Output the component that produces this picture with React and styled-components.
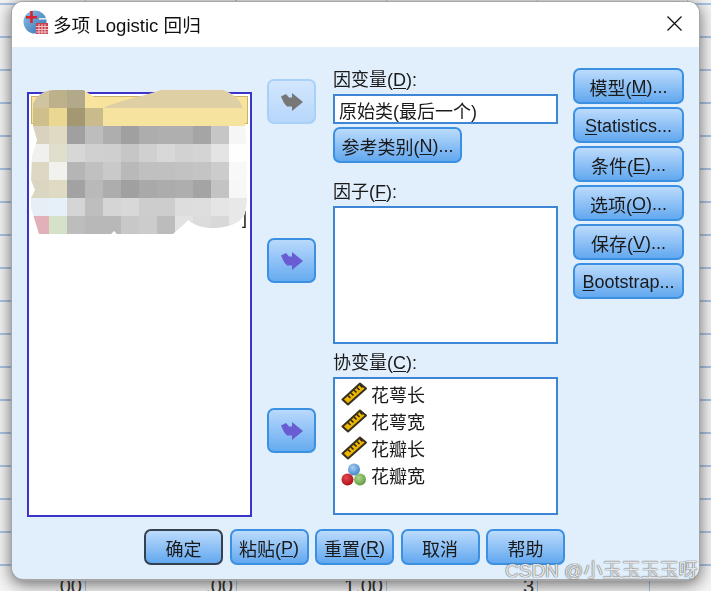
import React from 'react'
import styled, { createGlobalStyle, css } from 'styled-components'

const GlobalStyle = createGlobalStyle`
  html, body {
    margin: 0;
    padding: 0;
    overflow: hidden;
  }
  body {
    font-family: "Liberation Sans", "Noto Sans CJK SC", sans-serif;
    color: #1a1a1a;
  }
`

const Backdrop = styled.div`
  position: relative;
  width: 711px;
  height: 591px;
  overflow: hidden;
  display: flex;
  flex-direction: column;
  justify-content: flex-end;
  background-color: #f4f4f4;
  background-image:
    repeating-linear-gradient(to bottom, transparent 0 3px, #a9c5e2 3px 5px, transparent 5px 33px),
    repeating-linear-gradient(to right, transparent 0 85px, #b4cbe2 85px 86px, transparent 86px 150.5px);
`

const SheetRow = styled.div`
  display: flex;
  height: 26px;
  background: #f4f4f4;
  border-top: 1px solid #a9c5e2;
  box-sizing: border-box;
`

const SheetCell = styled.div`
  width: ${props => props.$width}px;
  box-sizing: border-box;
  padding: 9px 3px 0 0;
  text-align: right;
  font-size: 20px;
  line-height: 22px;
  color: #333;
  border-right: 1px solid #a9c5e2;
`

const Dialog = styled.div`
  position: absolute;
  left: 12px;
  top: 2px;
  width: 687px;
  height: 577px;
  box-sizing: border-box;
  border-radius: 11px;
  overflow: hidden;
  background: #e1eefb;
  display: flex;
  flex-direction: column;
  filter: blur(0.4px);
`

const DialogShadow = styled.div`
  position: absolute;
  left: 11px;
  top: 1px;
  width: 689px;
  height: 580px;
  border-radius: 12px;
  background: #a6a6a6;
  box-shadow: 0 3px 16px rgba(0, 0, 0, 0.58);
`

const TitleBar = styled.div`
  height: 45px;
  flex: none;
  box-sizing: border-box;
  background: #fff;
  display: flex;
  align-items: center;
  gap: 4px;
  padding: 0 17px 3px 11px;
  font-size: 18.6px;
  color: #111;
`

const TitleText = styled.span`
  flex: 1;
`

const Content = styled.div`
  flex: 1;
  padding: 21px 15px 0;
  display: flex;
  flex-direction: column;
`

const TopRow = styled.div`
  display: flex;
`

const SourceList = styled.div`
  position: relative;
  width: 225px;
  height: 425px;
  margin-top: 24px;
  box-sizing: border-box;
  background: #fff;
  border: 2px solid #3a35c8;
  padding: 2px;
`

const SelectedRow = styled.div`
  height: 28px;
  box-sizing: border-box;
  background: #f8e39d;
  border: 1px solid #c9b26a;
`

const HiddenTail = styled.span`
  position: absolute;
  right: 3px;
  top: 114px;
  font-size: 18px;
  line-height: 20px;
`

const Mosaic = styled.div`
  position: absolute;
  left: 2px;
  top: -4px;
  width: 216px;
  height: 144px;
  display: grid;
  grid-template-columns: repeat(12, 18px);
  grid-auto-rows: 18px;
  clip-path: path('M2 14 C6 4 14 0 24 0 L52 0 C60 4 68 10 72 18 C84 12 104 8 124 2 L130 0 L192 0 C204 4 212 12 213 24 L214 36 L216 60 L215 100 L216 110 L214 124 C210 132 200 138 180 138 C170 138 162 134 157 130 C152 136 146 140 142 144 L86 144 L83 141 L80 144 L8 144 L0 118 L0 108 L4 100 L0 90 L1 66 L6 50 L2 36 Z');
`

const MosaicCell = styled.div`
  background: ${props => props.$color};
`

const ArrowColumn = styled.div`
  width: 49px;
  margin: 0 17px 0 15px;
  display: flex;
  flex-direction: column;
`

const ArrowButton = styled.div`
  width: 49px;
  height: 45px;
  margin-top: ${props => props.$top}px;
  box-sizing: border-box;
  border-radius: 7px;
  display: flex;
  align-items: center;
  justify-content: center;
  ${props => props.$disabled
    ? css`
      border: 2px solid #a9d0f8;
      background: linear-gradient(#d3e6fd, #b6d7fb);
    `
    : css`
      border: 2px solid #3c90e2;
      background: linear-gradient(#b9d9fc, #66abf0);
    `}
`

const FieldColumn = styled.div`
  width: 225px;
  margin-right: 15px;
  display: flex;
  flex-direction: column;
  padding-top: 1px;
`

const FieldLabel = styled.div`
  font-size: 18px;
  line-height: 22px;
  margin: ${props => props.$top}px 0 3px;
`

const TextField = styled.div`
  height: 30px;
  box-sizing: border-box;
  background: #fff;
  border: 2px solid #3d86d6;
  padding-left: 4px;
  font-size: 18px;
  line-height: 32px;
  overflow: hidden;
  margin-bottom: 3px;
`

const ListBox = styled.div`
  height: 138px;
  box-sizing: border-box;
  background: #fff;
  border: 2px solid #3d86d6;
  padding: 1px 0 0 6px;
`

const VariableRow = styled.div`
  display: flex;
  align-items: center;
  height: 27px;
  gap: 4px;
  font-size: 18px;
`

const PushButton = styled.div`
  height: 36px;
  box-sizing: border-box;
  width: ${props => (props.$width ? `${props.$width}px` : 'auto')};
  border-radius: 7px;
  border: 2px solid ${props => (props.$default ? '#34424f' : '#3c90e2')};
  background: linear-gradient(#bcdbfc, #62a8ef);
  display: flex;
  align-items: center;
  justify-content: center;
  padding-top: 2px;
  font-size: 18px;
  white-space: nowrap;
`

const SideColumn = styled.div`
  width: 111px;
  display: flex;
  flex-direction: column;
  gap: 3px;
`

const BottomRow = styled.div`
  display: flex;
  justify-content: flex-end;
  gap: 6.5px;
  margin-top: 12px;
  padding-right: 119px;
`

const Key = styled.span`
  text-decoration: underline;
  text-underline-offset: 2px;
`

const Watermark = styled.div`
  position: absolute;
  left: 505px;
  top: 560px;
  font-size: 19px;
  line-height: 22px;
  color: rgba(255, 255, 255, 0.85);
  text-shadow: 0 0 1px #555, 0 0 1px #555;
  white-space: nowrap;
`

const mosaicRows = [
  ['#d0c4a0', '#bdb18b', '#b2a88a', '#f8e49f', '#dfcfa4', '#dfcfa4', '#dfcfa4', '#dfcfa4', '#dfcfa4', '#dfcfa4', '#dfcfa4', '#dfcfa4'],
  ['#cfbf8a', '#ead792', '#a49873', '#c9bb8b', '#f7e3a0', '#f7e3a0', '#f7e3a0', '#f7e3a0', '#f7e3a0', '#f7e3a0', '#f7e3a0', '#f7e3a0'],
  ['#d8d2bf', '#dedac4', '#a0a0a0', '#bdbdbd', '#aeaeae', '#a0a0a0', '#adadad', '#afafaf', '#afafaf', '#a5a5a5', '#c6c6c6', '#f6f6f6'],
  ['#f0f0ee', '#e0dfcb', '#d7d7d7', '#d0d0d0', '#cfcfcf', '#c6c6c6', '#d0d0d0', '#d8d8d8', '#d2d2d2', '#d4d4d4', '#e4e4e4', '#fefefe'],
  ['#dcd8c4', '#f1f1ee', '#b5b5b5', '#c0c0c0', '#c9c9c9', '#b9b9b9', '#c0c0c0', '#c0c0c0', '#c2c2c2', '#c4c4c4', '#cccccc', '#f8f8f8'],
  ['#dad6c2', '#dedac4', '#a2a2a2', '#b9b9b9', '#adadad', '#a0a0a0', '#a9a9a9', '#acacac', '#aeaeae', '#a4a4a4', '#c3c3c3', '#f7f7f7'],
  ['#e6eef6', '#e6f0f8', '#d5d5d5', '#bebebe', '#d5d5d5', '#d8d8d8', '#cdcdcd', '#cdcdcd', '#dddddd', '#dedede', '#e5e5e5', '#e8e8e8'],
  ['#e2b0b8', '#d5e2c8', '#bdbdbd', '#b8b8b8', '#b8b8b8', '#c8c8c8', '#cccccc', '#bcbcbc', '#e2e2e2', '#dcdcdc', '#d8d8d8', '#e8e8e8']
]

const AppIcon = () => (
  <svg width="26" height="26" viewBox="0 0 26 26">
    <defs>
      <linearGradient id="globe" x1="0" y1="0" x2="1" y2="1">
        <stop offset="0" stopColor="#8fc0e6" />
        <stop offset="1" stopColor="#2f6fb0" />
      </linearGradient>
    </defs>
    <circle cx="12" cy="12" r="11.5" fill="url(#globe)" />
    <rect x="16" y="8" width="7" height="1.6" fill="#dfeaf4" />
    <rect x="3" y="6" width="11" height="2.6" fill="#d8232f" />
    <rect x="7.2" y="1" width="2.6" height="12" fill="#d8232f" />
    <rect x="13" y="13" width="12" height="11" fill="#c8404e" />
    <path d="M13 16.5h12M13 19.5h12M13 22h12M16 14v10M19 14v10M22 14v10" stroke="#f2c4c8" strokeWidth="1" />
  </svg>
)

const CloseIcon = () => (
  <svg width="15" height="15" viewBox="0 0 15 15">
    <path d="M0.5 0.5L14.5 14.5M14.5 0.5L0.5 14.5" stroke="#111" strokeWidth="1.3" />
  </svg>
)

const MoveArrow = ({ color }) => (
  <svg width="22" height="18" viewBox="0 0 22 18">
    <path d="M0 3.5L5 1L8 4.5H11V0L22 9L11 18V13.5H6L3 10Z" fill={color} />
  </svg>
)

const RulerIcon = () => (
  <svg width="26" height="24" viewBox="0 0 26 24">
    <path d="M1.5 17.5L19 1.5L25 6.5L7 22.5Z" fill="#efb600" stroke="#37311f" strokeWidth="2" strokeLinejoin="round" />
    <path d="M7 13.5L9.5 16M10 11L12.5 13.5M13 8L15.5 10.5M16 5.5L18.5 8M19 3L21.5 5.5" stroke="#2c2616" strokeWidth="1.6" />
  </svg>
)

const NominalIcon = () => (
  <svg width="26" height="24" viewBox="0 0 26 24">
    <defs>
      <radialGradient id="ballBlue" cx="0.4" cy="0.35" r="0.7">
        <stop offset="0" stopColor="#a8cff4" />
        <stop offset="1" stopColor="#3f82c8" />
      </radialGradient>
      <radialGradient id="ballRed" cx="0.4" cy="0.35" r="0.7">
        <stop offset="0" stopColor="#e8474f" />
        <stop offset="1" stopColor="#a50c18" />
      </radialGradient>
      <radialGradient id="ballGreen" cx="0.4" cy="0.35" r="0.7">
        <stop offset="0" stopColor="#add68a" />
        <stop offset="1" stopColor="#5f9a3e" />
      </radialGradient>
    </defs>
    <circle cx="13" cy="6.5" r="6" fill="url(#ballBlue)" />
    <circle cx="6.5" cy="16.5" r="6" fill="url(#ballRed)" />
    <circle cx="19" cy="16.5" r="6" fill="url(#ballGreen)" />
  </svg>
)

const sideButtons = [
  ['模型(', 'M', ')...'],
  ['', 'S', 'tatistics...'],
  ['条件(', 'E', ')...'],
  ['选项(', 'O', ')...'],
  ['保存(', 'V', ')...'],
  ['', 'B', 'ootstrap...']
]

const covariates = [
  { name: '花萼长', Icon: RulerIcon },
  { name: '花萼宽', Icon: RulerIcon },
  { name: '花瓣长', Icon: RulerIcon },
  { name: '花瓣宽', Icon: NominalIcon }
]

const App = () => (
  <Backdrop>
    <GlobalStyle />
    <SheetRow>
      <SheetCell $width={86}>.00</SheetCell>
      <SheetCell $width={151}>.00</SheetCell>
      <SheetCell $width={150}>1.00</SheetCell>
      <SheetCell $width={151}>3</SheetCell>
      <SheetCell $width={112} />
    </SheetRow>
    <DialogShadow />
    <Dialog>
      <TitleBar>
        <AppIcon />
        <TitleText>多项 Logistic 回归</TitleText>
        <CloseIcon />
      </TitleBar>
      <Content>
        <TopRow>
          <SourceList>
            <SelectedRow />
            <HiddenTail>]</HiddenTail>
            <Mosaic>
              {mosaicRows.flat().map((color, i) => <MosaicCell key={i} $color={color} />)}
            </Mosaic>
          </SourceList>
          <ArrowColumn>
            <ArrowButton $top={11} $disabled><MoveArrow color="#777" /></ArrowButton>
            <ArrowButton $top={114}><MoveArrow color="#6a5cd2" /></ArrowButton>
            <ArrowButton $top={125}><MoveArrow color="#6a5cd2" /></ArrowButton>
          </ArrowColumn>
          <FieldColumn>
            <FieldLabel $top={0}>因变量(<Key>D</Key>):</FieldLabel>
            <TextField>原始类(最后一个)</TextField>
            <PushButton $width={129}>参考类别(<Key>N</Key>)...</PushButton>
            <FieldLabel $top={18}>因子(<Key>F</Key>):</FieldLabel>
            <ListBox />
            <FieldLabel $top={8}>协变量(<Key>C</Key>):</FieldLabel>
            <ListBox>
              {covariates.map(({ name, Icon }) => (
                <VariableRow key={name}><Icon />{name}</VariableRow>
              ))}
            </ListBox>
          </FieldColumn>
          <SideColumn>
            {sideButtons.map(([before, key, after]) => (
              <PushButton key={key}>{before}<Key>{key}</Key>{after}</PushButton>
            ))}
          </SideColumn>
        </TopRow>
        <BottomRow>
          <PushButton $width={79} $default>确定</PushButton>
          <PushButton $width={79}>粘贴(<Key>P</Key>)</PushButton>
          <PushButton $width={79}>重置(<Key>R</Key>)</PushButton>
          <PushButton $width={79}>取消</PushButton>
          <PushButton $width={79}>帮助</PushButton>
        </BottomRow>
      </Content>
    </Dialog>
    <Watermark>CSDN @小玉玉玉玉呀</Watermark>
  </Backdrop>
)

export default App
